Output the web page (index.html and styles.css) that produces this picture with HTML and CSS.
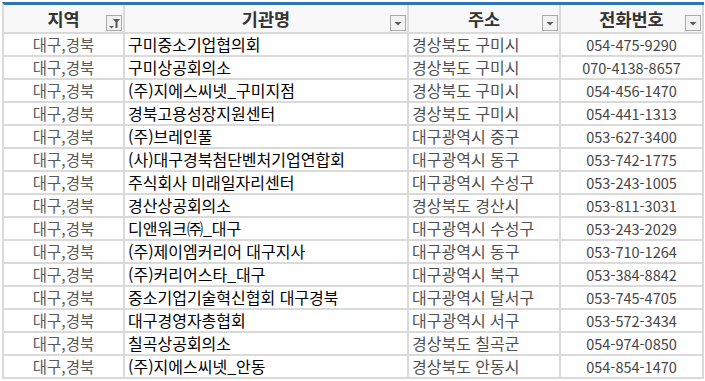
FILE: index.html
```html
<!DOCTYPE html>
<html lang="ko">
<head>
<meta charset="utf-8">
<link rel="stylesheet" href="styles.css">
</head>
<body>
<div class="sheet">
  <div class="row head">
    <div class="cell c1">지역<span class="fbtn"><svg width="14" height="14" viewBox="0 0 14 14"><path d="M2 10h5l-2.5 2.5z" fill="#5a5a5a"/><path d="M6 3h7l-2.5 3v6h-2V6z" fill="#5a5a5a"/></svg></span></div>
    <div class="cell c2">기관명<span class="fbtn"><svg width="14" height="14" viewBox="0 0 14 14"><path d="M3.5 6h7l-3.5 3.5z" fill="#5a5a5a"/></svg></span></div>
    <div class="cell c3">주소<span class="fbtn"><svg width="14" height="14" viewBox="0 0 14 14"><path d="M3.5 6h7l-3.5 3.5z" fill="#5a5a5a"/></svg></span></div>
    <div class="cell c4">전화번호<span class="fbtn"><svg width="14" height="14" viewBox="0 0 14 14"><path d="M3.5 6h7l-3.5 3.5z" fill="#5a5a5a"/></svg></span></div>
  </div>
  <div class="row"><div class="cell c1">대구,경북</div><div class="cell c2">구미중소기업협의회</div><div class="cell c3">경상북도 구미시</div><div class="cell c4">054-475-9290</div></div>
  <div class="row"><div class="cell c1">대구,경북</div><div class="cell c2">구미상공회의소</div><div class="cell c3">경상북도 구미시</div><div class="cell c4">070-4138-8657</div></div>
  <div class="row"><div class="cell c1">대구,경북</div><div class="cell c2">(주)지에스씨넷_구미지점</div><div class="cell c3">경상북도 구미시</div><div class="cell c4">054-456-1470</div></div>
  <div class="row"><div class="cell c1">대구,경북</div><div class="cell c2">경북고용성장지원센터</div><div class="cell c3">경상북도 구미시</div><div class="cell c4">054-441-1313</div></div>
  <div class="row"><div class="cell c1">대구,경북</div><div class="cell c2">(주)브레인풀</div><div class="cell c3">대구광역시 중구</div><div class="cell c4">053-627-3400</div></div>
  <div class="row"><div class="cell c1">대구,경북</div><div class="cell c2">(사)대구경북첨단벤처기업연합회</div><div class="cell c3">대구광역시 동구</div><div class="cell c4">053-742-1775</div></div>
  <div class="row"><div class="cell c1">대구,경북</div><div class="cell c2">주식회사 미래일자리센터</div><div class="cell c3">대구광역시 수성구</div><div class="cell c4">053-243-1005</div></div>
  <div class="row"><div class="cell c1">대구,경북</div><div class="cell c2">경산상공회의소</div><div class="cell c3">경상북도 경산시</div><div class="cell c4">053-811-3031</div></div>
  <div class="row"><div class="cell c1">대구,경북</div><div class="cell c2">디앤워크㈜_대구</div><div class="cell c3">대구광역시 수성구</div><div class="cell c4">053-243-2029</div></div>
  <div class="row"><div class="cell c1">대구,경북</div><div class="cell c2">(주)제이엠커리어 대구지사</div><div class="cell c3">대구광역시 동구</div><div class="cell c4">053-710-1264</div></div>
  <div class="row"><div class="cell c1">대구,경북</div><div class="cell c2">(주)커리어스타_대구</div><div class="cell c3">대구광역시 북구</div><div class="cell c4">053-384-8842</div></div>
  <div class="row"><div class="cell c1">대구,경북</div><div class="cell c2">중소기업기술혁신협회 대구경북</div><div class="cell c3">대구광역시 달서구</div><div class="cell c4">053-745-4705</div></div>
  <div class="row"><div class="cell c1">대구,경북</div><div class="cell c2">대구경영자총협회</div><div class="cell c3">대구광역시 서구</div><div class="cell c4">053-572-3434</div></div>
  <div class="row"><div class="cell c1">대구,경북</div><div class="cell c2">칠곡상공회의소</div><div class="cell c3">경상북도 칠곡군</div><div class="cell c4">054-974-0850</div></div>
  <div class="row"><div class="cell c1">대구,경북</div><div class="cell c2">(주)지에스씨넷_안동</div><div class="cell c3">경상북도 안동시</div><div class="cell c4">054-854-1470</div></div>
</div>
</body>
</html>
```
FILE: styles.css
```css
html, body {
  margin: 0;
  padding: 0;
  background: #ffffff;
}
body {
  font-family: "Noto Sans CJK KR", "Noto Sans", sans-serif;
}
.sheet {
  margin: 2px 0 0 2px;
  width: 702px;
  border-top: 3px solid #2e75b6;
  border-left: 2px solid #dadada;
  box-sizing: border-box;
}
.row {
  display: grid;
  grid-template-columns: 121px 284px 152px 143px;
  height: 23px;
}
.row.head {
  height: 29px;
  background: #f8f8f8;
}
.cell {
  position: relative;
  border-right: 2px solid #dadada;
  border-bottom: 2px solid #dadada;
  font-size: 16px;
  line-height: 21px;
  white-space: nowrap;
  padding: 0 3px;
}
.head .cell {
  font-size: 17.5px;
  font-weight: bold;
  color: #333333;
  line-height: 27px;
  text-align: center;
}
.c1 { text-align: center; color: #595959; font-size: 15.5px; }
.c2 { color: #000000; }
.c3 { color: #505050; }
.c4 { text-align: center; color: #454545; font-size: 14.5px; }
.fbtn {
  position: absolute;
  right: 1px;
  bottom: 1px;
  width: 14px;
  height: 14px;
  border: 1px solid #a9a9a9;
  background: #f2f2f2;
  display: flex;
}
```
